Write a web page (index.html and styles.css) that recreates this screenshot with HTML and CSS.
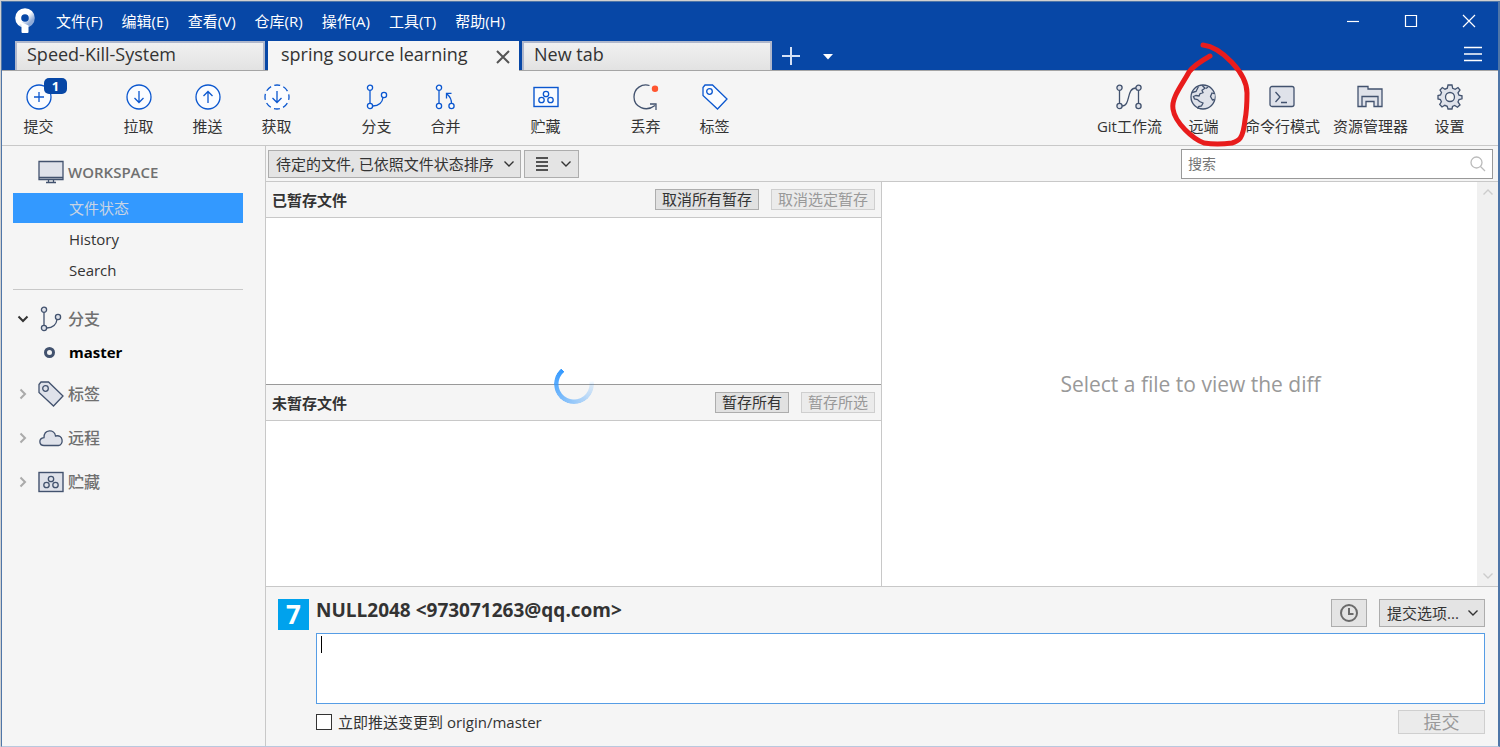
FILE: index.html
```html
<!DOCTYPE html>
<html lang="zh-CN">
<head>
<meta charset="utf-8">
<title>Sourcetree</title>
<link rel="stylesheet" href="styles.css">
</head>
<body>
<svg width="0" height="0" class="defs" aria-hidden="true">
  <defs>
    <symbol id="stash" viewBox="0 0 26 26"><rect x="1" y="3.500" width="24" height="19" stroke-width="1.400"/><circle cx="13" cy="10" r="2.700"/><circle cx="8.500" cy="16" r="2.700"/><circle cx="17.500" cy="16" r="2.700"/></symbol>
    <symbol id="branch" viewBox="0 0 26 26"><path d="M6 6.500v13M8.800 22C15 22 18.500 18 19 13.500" fill="none"/><circle cx="6" cy="3.800" r="2.600"/><circle cx="6" cy="22" r="2.600"/><circle cx="20" cy="11" r="2.600"/></symbol>
    <symbol id="tag" viewBox="0 0 26 26"><path d="M1 3.500 3 1h7.500L25 15 15.500 25 1 11.500z"/><circle cx="7.500" cy="7.500" r="2.800"/></symbol>
    <symbol id="down" viewBox="0 0 12 8"><path d="m1.500 1.500 4.500 4.500 4.500-4.500" fill="none"/></symbol>
    <symbol id="right" viewBox="0 0 8 12"><path d="m1.500 1.500 4.500 4.500-4.500 4.500" fill="none"/></symbol>
  </defs>
</svg>
<div class="window">
  <header class="titlebar">
    <svg class="logo" width="20" height="26" viewBox="0 0 20 26"><defs><linearGradient id="lg" x1="0" y1="0" x2="1" y2="1"><stop offset=".5" stop-color="#fff"/><stop offset=".85" stop-color="#8fabd8"/></linearGradient></defs><circle cx="10" cy="10" r="6.800" fill="none" stroke="url(#lg)" stroke-width="6"/><path d="M1 13l5.500 3.500V24q0 1 1 1h5q1 0 1-1v-6.500L8 15z" fill="#fff"/></svg>
    <nav class="menu">
      <button>文件(F)</button><button>编辑(E)</button><button>查看(V)</button><button>仓库(R)</button><button>操作(A)</button><button>工具(T)</button><button>帮助(H)</button>
    </nav>
    <div class="winbuttons">
      <button aria-label="最小化"><svg width="14" height="14"><path d="M1 7.500h12"/></svg></button>
      <button aria-label="最大化"><svg width="14" height="14"><path d="M1.500 1.500h11v11h-11z"/></svg></button>
      <button aria-label="关闭"><svg width="14" height="14"><path d="M1 1l12 12M13 1 1 13"/></svg></button>
    </div>
  </header>
  <div class="tabbar">
    <button class="tab">Speed-Kill-System</button>
    <div class="tab active"><span>spring source learning</span><button class="close" aria-label="关闭标签"><svg width="14" height="14"><path d="M1 1l12 12M13 1 1 13" stroke="#555" stroke-width="2"/></svg></button></div>
    <button class="tab">New tab</button>
    <button class="tabtool" aria-label="新建标签"><svg width="18" height="18"><path d="M9 0v18M0 9h18" stroke="#d5e1f5" stroke-width="2"/></svg></button>
    <button class="tabtool" aria-label="标签列表"><svg width="10" height="6"><path d="M0 0h10L5 5.500z" fill="#fff"/></svg></button>
    <button class="tabtool hamburger" aria-label="菜单"><svg width="18" height="16"><path d="M0 1.500h18M0 8h18M0 14.500h18" stroke="#fff" stroke-width="1.500"/></svg></button>
  </div>
  <div class="toolbar">
    <div class="group">
      <button class="tool"><svg class="icon blue" viewBox="0 0 26 26"><circle cx="13" cy="13" r="12"/><path d="M13 8v10M8 13h10"/></svg>提交<span class="badge">1</span></button>
    </div>
    <div class="group">
      <button class="tool"><svg class="icon blue" viewBox="0 0 26 26"><circle cx="13" cy="13" r="12"/><path d="M13 7v11M8.500 14l4.500 4.500 4.500-4.500" fill="none"/></svg>拉取</button>
      <button class="tool"><svg class="icon blue" viewBox="0 0 26 26"><circle cx="13" cy="13" r="12"/><path d="M13 19V8M8.500 12 13 7.500l4.500 4.500" fill="none"/></svg>推送</button>
      <button class="tool"><svg class="icon blue" viewBox="0 0 26 26"><circle cx="13" cy="13" r="12" stroke-dasharray="6 3.400" stroke-dashoffset="3"/><path d="M13 7v11M8.500 14l4.500 4.500 4.500-4.500" fill="none"/></svg>获取</button>
    </div>
    <div class="group">
      <button class="tool"><svg class="icon blue"><use href="#branch"/></svg>分支</button>
      <button class="tool"><svg class="icon blue" viewBox="0 0 26 26"><path d="M6 6.500v13" fill="none"/><circle cx="6" cy="3.800" r="2.600"/><circle cx="6" cy="22" r="2.600"/><circle cx="18.500" cy="22" r="2.600"/><path d="M18.500 19.500c0-4-1.500-7-4.500-9.500M13.500 14.500V9.300h5" fill="none"/></svg>合并</button>
    </div>
    <div class="group">
      <button class="tool"><svg class="icon blue"><use href="#stash"/></svg>贮藏</button>
    </div>
    <div class="group">
      <button class="tool"><svg class="icon slate" viewBox="0 0 26 26"><path d="M16.500 1.500C9 -1 1 4.500 1 13c0 10 12 15.500 21 8.500M17 20h6v6" fill="none"/><circle cx="22" cy="4.800" r="3.200" fill="#ff5630" stroke="none"/></svg>丢弃</button>
      <button class="tool"><svg class="icon blue"><use href="#tag"/></svg>标签</button>
    </div>
    <div class="group end">
      <button class="tool"><svg class="icon slate" viewBox="0 0 26 26"><path d="M3.500 6.500v13M22.500 6.500v13M6 22c9 0 4-18 14-18" fill="none"/><circle cx="3.500" cy="3.800" r="2.600"/><circle cx="3.500" cy="22" r="2.600"/><circle cx="22.500" cy="3.800" r="2.600"/><circle cx="22.500" cy="22" r="2.600"/></svg>Git工作流</button>
      <button class="tool"><svg class="icon slate" viewBox="0 0 26 26"><circle cx="13" cy="13" r="12"/><path d="M12 1.200l3 3-3 2 1 2.500-3 1-1 2.300-3-.5-2.500 1 1 2.500 3 .5 2 2 3.500 1.500-1.500 3-3 .5-.8 2.200M2 8.500l4-1 2.500-5M16 4.500l2-1.500M25 10l-3-1-1.500 3.500 2 3.500 1.800-.5" /></svg>远端
        <svg class="ring" width="100" height="110" viewBox="0 0 100 110"><path d="M44 5C62 7 88 33 88 53Q88 70 86 80C84 99 80 101 73 103Q58 105 45 103C34 99 16 83 14 69C12 58 23 45 30 32Q35 25 51 16"/></svg></button>
      <button class="tool"><svg class="icon slate" viewBox="0 0 26 26"><rect x="1" y="2.500" width="24" height="20" rx="2"/><path d="M6.500 8l4.500 5-4.500 5M12 18.500h6" fill="none"/></svg>命令行模式</button>
      <button class="tool"><svg class="icon slate" viewBox="0 0 26 26"><path d="M1 22.500v-20h10v2.500h14v17.500h-4v-10H5v10zM5 12.500h16v10h-4v-5H9v5H5z"/></svg>资源管理器</button>
      <button class="tool"><svg class="icon slate" viewBox="0 0 26 26"><path d="M11 1h4l.7 3.300 2.500 1L21 3.500 23 6l-2 2.800 1 2.400 3 .6v3l-3 .8-1 2.400 2 2.800-2.500 2.400-2.800-1.700-2.200 1L15 25h-4l-.8-2.700-2.400-1L5 23l-2.300-2.500 1.700-2.700-1-2.300L1 15v-3.500l2.500-.5 1-2.500L3 6l2.300-2.500L8 5.200l2.300-1z"/><circle cx="13" cy="13" r="4.500" fill="#f5f5f5"/></svg>设置</button>
    </div>
  </div>
  <div class="body">
    <aside class="sidebar">
      <h2 class="section workspace"><svg class="icon slate" viewBox="0 0 26 26"><path d="M1 2.500h24v18H1zM1 18.500h24M10.500 20.500v3M15.500 20.500v3M8 23.500h10"/></svg>WORKSPACE</h2>
      <a class="item selected" href="#">文件状态</a>
      <a class="item" href="#">History</a>
      <a class="item" href="#">Search</a>
      <hr>
      <h2 class="section"><svg class="chev open"><use href="#down"/></svg><svg class="icon slate"><use href="#branch"/></svg>分支</h2>
      <a class="item branch" href="#"><i class="dot"></i>master</a>
      <h2 class="section"><svg class="chev"><use href="#right"/></svg><svg class="icon slate"><use href="#tag"/></svg>标签</h2>
      <h2 class="section"><svg class="chev"><use href="#right"/></svg><svg class="icon slate" viewBox="0 0 26 26"><path d="M6 20.500c-5 0-6-7 0-7.800C6 4 16.500 4 17.500 11c8-2 8.500 9 3 9.500z"/></svg>远程</h2>
      <h2 class="section"><svg class="chev"><use href="#right"/></svg><svg class="icon slate"><use href="#stash"/></svg>贮藏</h2>
    </aside>
    <main class="main">
      <div class="filterbar">
        <div class="pick"><select aria-label="排序"><option>待定的文件, 已依照文件状态排序</option></select><svg class="arrow"><use href="#down"/></svg></div>
        <button class="viewmode" aria-label="视图"><svg width="14" height="14"><path d="M0 1h12M0 5h12M0 9h12M0 13h12" stroke="#222" stroke-width="1.500"/></svg><svg class="arrow"><use href="#down"/></svg></button>
        <label class="search"><input type="text" placeholder="搜索" aria-label="搜索"><svg width="16" height="16" viewBox="0 0 16 16"><circle cx="6.500" cy="6.500" r="5.500"/><path d="M10.500 10.500 15 15"/></svg></label>
      </div>
      <div class="panes">
        <div class="files">
          <section class="pane"><header><h3>已暂存文件</h3><button>取消所有暂存</button><button disabled>取消选定暂存</button></header></section>
          <section class="pane"><header><h3>未暂存文件</h3><button>暂存所有</button><button disabled>暂存所选</button></header></section>
          <div class="spinner"></div>
        </div>
        <div class="diff">
          <p>Select a file to view the diff</p>
          <div class="scroll"><svg class="arrow up"><use href="#down"/></svg><svg class="arrow"><use href="#down"/></svg></div>
        </div>
      </div>
      <form class="commit">
        <div class="avatar">7</div>
        <div class="fields">
          <div class="row author"><strong>NULL2048 &lt;973071263@qq.com&gt;</strong>
            <button type="button" class="clock" aria-label="历史消息"><svg width="20" height="20"><circle cx="10" cy="10" r="8"/><path d="M10 5v6h4.500"/></svg></button>
            <div class="pick small"><select aria-label="提交选项"><option>提交选项...</option></select><svg class="arrow"><use href="#down"/></svg></div></div>
          <div class="message"><textarea aria-label="提交信息"></textarea><i class="caret"></i></div>
          <div class="row"><label class="push"><input type="checkbox">立即推送变更到 origin/master</label><button class="submit" disabled>提交</button></div>
        </div>
      </form>
    </main>
  </div>
</div>
</body>
</html>
```
FILE: styles.css
```css
* { box-sizing: border-box; }
body {
  margin: 0;
  padding: 1px 0 0 1px;
  min-height: 100vh;
  display: flex;
  background: #d0d0d0;
  color: #333;
  font: 15px/20px "Open Sans", "Noto Sans CJK SC", sans-serif;
}
button, input, select, textarea { font: inherit; color: inherit; margin: 0; border-radius: 0; }
button { border: 0; padding: 0; background: none; white-space: nowrap; }
svg { flex: none; display: block; }
.defs { position: absolute; }
a { color: inherit; text-decoration: none; }
h2, h3, p { margin: 0; }

.window {
  flex: 1;
  min-width: 0;
  display: flex;
  flex-direction: column;
  border: 1px solid #4f76a8;
  border-right-width: 2px;
  border-bottom-color: #b9c8de;
  background: #f5f5f5;
}

.titlebar { display: flex; align-items: center; height: 38px; padding-left: 13px; background: #0747a6; color: #fff; }
.menu { display: flex; gap: 19px; margin-left: 21px; }
.winbuttons { display: flex; margin-left: auto; }
.winbuttons button { width: 58px; height: 38px; display: grid; place-items: center; }
.winbuttons path { fill: none; stroke: #fff; stroke-width: 1.2; }

.tabbar { display: flex; height: 31px; padding: 1px 16px 0 13px; background: #0747a6; border-bottom: 1px solid #a5a5a5; }
.tab {
  width: 250px;
  height: 29px;
  margin-right: 3px;
  padding: 0 10px 6px;
  border: 2px solid #b0b8cc;
  border-bottom: 0;
  background: linear-gradient(#f1f1f1, #e2e2e2);
  font-size: 18px;
  line-height: 22px;
  text-align: left;
}
.tab.active { display: flex; justify-content: space-between; width: 251px; height: 30px; padding: 0 7px 4px 11px; border-color: #f5f5f5; background: #f5f5f5; }
.close { padding-top: 4px; }
.tabtool { padding: 0 7px; }
.tabtool + .tabtool { padding: 2px 16px 0; }
.tabtool.hamburger { margin-left: auto; padding: 0 0 4px; }

.toolbar { display: flex; gap: 31px; height: 75px; padding-left: 2px; border-bottom: 1px solid #c8c8c8; }
.group { display: flex; }
.end { margin-left: auto; gap: 13px; padding-right: 20px; }
.tool { position: relative; display: flex; flex-direction: column; align-items: center; gap: 6px; width: 69px; padding-top: 13px; }
.end .tool { width: auto; min-width: 57px; }
.icon { width: 26px; height: 26px; stroke-width: 1.3; }
.blue { stroke: #0b57cf; fill: #fafcff; }
.slate { stroke: #42526e; fill: #dfe2ea; }
.badge { position: absolute; left: 40px; top: 7px; width: 23px; height: 16px; border-radius: 5px; background: #0747a6; color: #fff; font-weight: 700; font-size: 13px; line-height: 16px; }
.ring { position: absolute; z-index: 2; top: -31px; left: calc(50% - 44px); pointer-events: none; fill: none; stroke: #e81c1c; stroke-width: 5; stroke-linecap: round; }

.body { flex: 1; display: flex; }
.sidebar { flex: none; width: 264px; padding: 5px 22px 0 11px; border-right: 1px solid #c8c8c8; }
.section { position: relative; display: flex; align-items: center; gap: 4px; height: 44px; padding-left: 25px; font-size: 16px; font-weight: 500; color: #707070; }
.section.workspace { height: 42px; font-size: 15px; font-weight: 600; }
.chev { position: absolute; left: 6px; width: 8px; height: 12px; stroke: #aaa; stroke-width: 2; }
.chev.open { left: 4px; width: 12px; height: 8px; stroke: #333; }
.item { display: flex; align-items: center; height: 30px; margin-bottom: 1px; padding-left: 56px; }
.item.selected { background: #3399ff; color: #c8d4e4; }
.sidebar hr { margin: 4px 0 7px; border: 0; border-top: 1px solid #c8c8c8; }
.item.branch { height: 22px; margin-bottom: 9px; padding-left: 31px; gap: 14px; color: #000; font-weight: 700; }
.dot { width: 11px; height: 11px; border: 3px solid #42526e; border-radius: 50%; }

.main { flex: 1; min-width: 0; display: flex; flex-direction: column; }
.filterbar { display: flex; align-items: center; gap: 3px; height: 36px; padding: 0 5px 0 2px; border-bottom: 1px solid #c8c8c8; }
.pick { position: relative; width: 253px; height: 28px; }
.pick select { width: 100%; height: 100%; padding: 0 7px; appearance: none; border: 1px solid #adadad; background: #e4e4e4; }
.arrow { width: 12px; height: 8px; stroke: #333; stroke-width: 1.4; }
.pick .arrow { position: absolute; right: 6px; top: 10px; pointer-events: none; }
.viewmode { display: flex; align-items: center; justify-content: space-between; width: 55px; height: 28px; padding: 0 6px 0 11px; border: 1px solid #adadad; background: #e4e4e4; }
.search { display: flex; align-items: center; width: 312px; height: 30px; margin-left: auto; padding: 0 6px; border: 1px solid #999; background: #fff; }
.search input { flex: 1; min-width: 0; padding: 0; border: 0; outline: 0; background: none; font-size: 14px; }
.search input::placeholder { color: #757575; }
.search svg { fill: none; stroke: #bbb; stroke-width: 1.3; }

.panes { flex: 1; display: grid; grid-template-columns: 1fr 1fr; background: #fff; }
.files { position: relative; display: grid; grid-template-rows: 1fr 1fr; border-right: 1px solid #c8c8c8; }
.pane + .pane { border-top: 1px solid #999; }
.pane header { display: flex; align-items: center; gap: 12px; height: 36px; padding: 0 6px; border-bottom: 1px solid #c8c8c8; background: #f5f5f5; }
.pane h3 { margin-right: auto; font-size: 15px; }
.pane button, .submit { height: 21px; padding: 0 6px; border: 1px solid #adadad; background: #e1e1e1; line-height: 19px; }
button:disabled { border-color: #cfcfcf; background: #ebebeb; color: #999; }
.spinner {
  position: absolute;
  left: calc(50% - 20px);
  top: calc(50% - 20px);
  width: 40px;
  height: 40px;
  border-radius: 50%;
  background: conic-gradient(transparent 80deg, #3399ff22 90deg, #3399ff 320deg, transparent 321deg);
  mask: radial-gradient(circle, transparent 15px, #000 16px);
}
.diff { display: flex; }
.diff p { flex: 1; align-self: center; padding-left: 22px; text-align: center; font-size: 21px; color: #999; }
.scroll { display: flex; flex-direction: column; justify-content: space-between; align-items: center; width: 21px; padding: 6px 0; background: #f0f0f0; }
.scroll .arrow { stroke: #ccc; }
.up { transform: rotate(180deg); }

.commit { display: flex; gap: 7px; padding: 12px 13px 12px 12px; border-top: 1px solid #c8c8c8; }
.avatar { flex: none; width: 31px; height: 31px; background: #00a2ed; color: #fff; font: 700 26px/31px "Open Sans", sans-serif; text-align: center; }
.fields { flex: 1; min-width: 0; }
.row { display: flex; align-items: center; }
.author strong { margin-right: auto; padding-bottom: 6px; font-size: 19px; line-height: 22px; }
.clock { display: grid; place-items: center; width: 36px; height: 28px; margin-right: 12px; border: 1px solid #adadad; background: #e4e4e4; }
.clock svg { fill: none; stroke: #6b6b6b; stroke-width: 2; }
.pick.small { width: 106px; }
.message { position: relative; margin: 6px 0; }
.message textarea { display: block; width: 100%; height: 71px; border: 1px solid #569de5; outline: 0; resize: none; background: #fff; }
.caret { position: absolute; left: 5px; top: 3px; width: 1px; height: 17px; background: #000; }
.push { display: flex; align-items: center; gap: 6px; }
.push input { width: 16px; height: 16px; appearance: none; border: 1px solid #333; background: #fff; }
.submit { width: 87px; height: 24px; margin-left: auto; font-size: 18px; line-height: 22px; }
```
